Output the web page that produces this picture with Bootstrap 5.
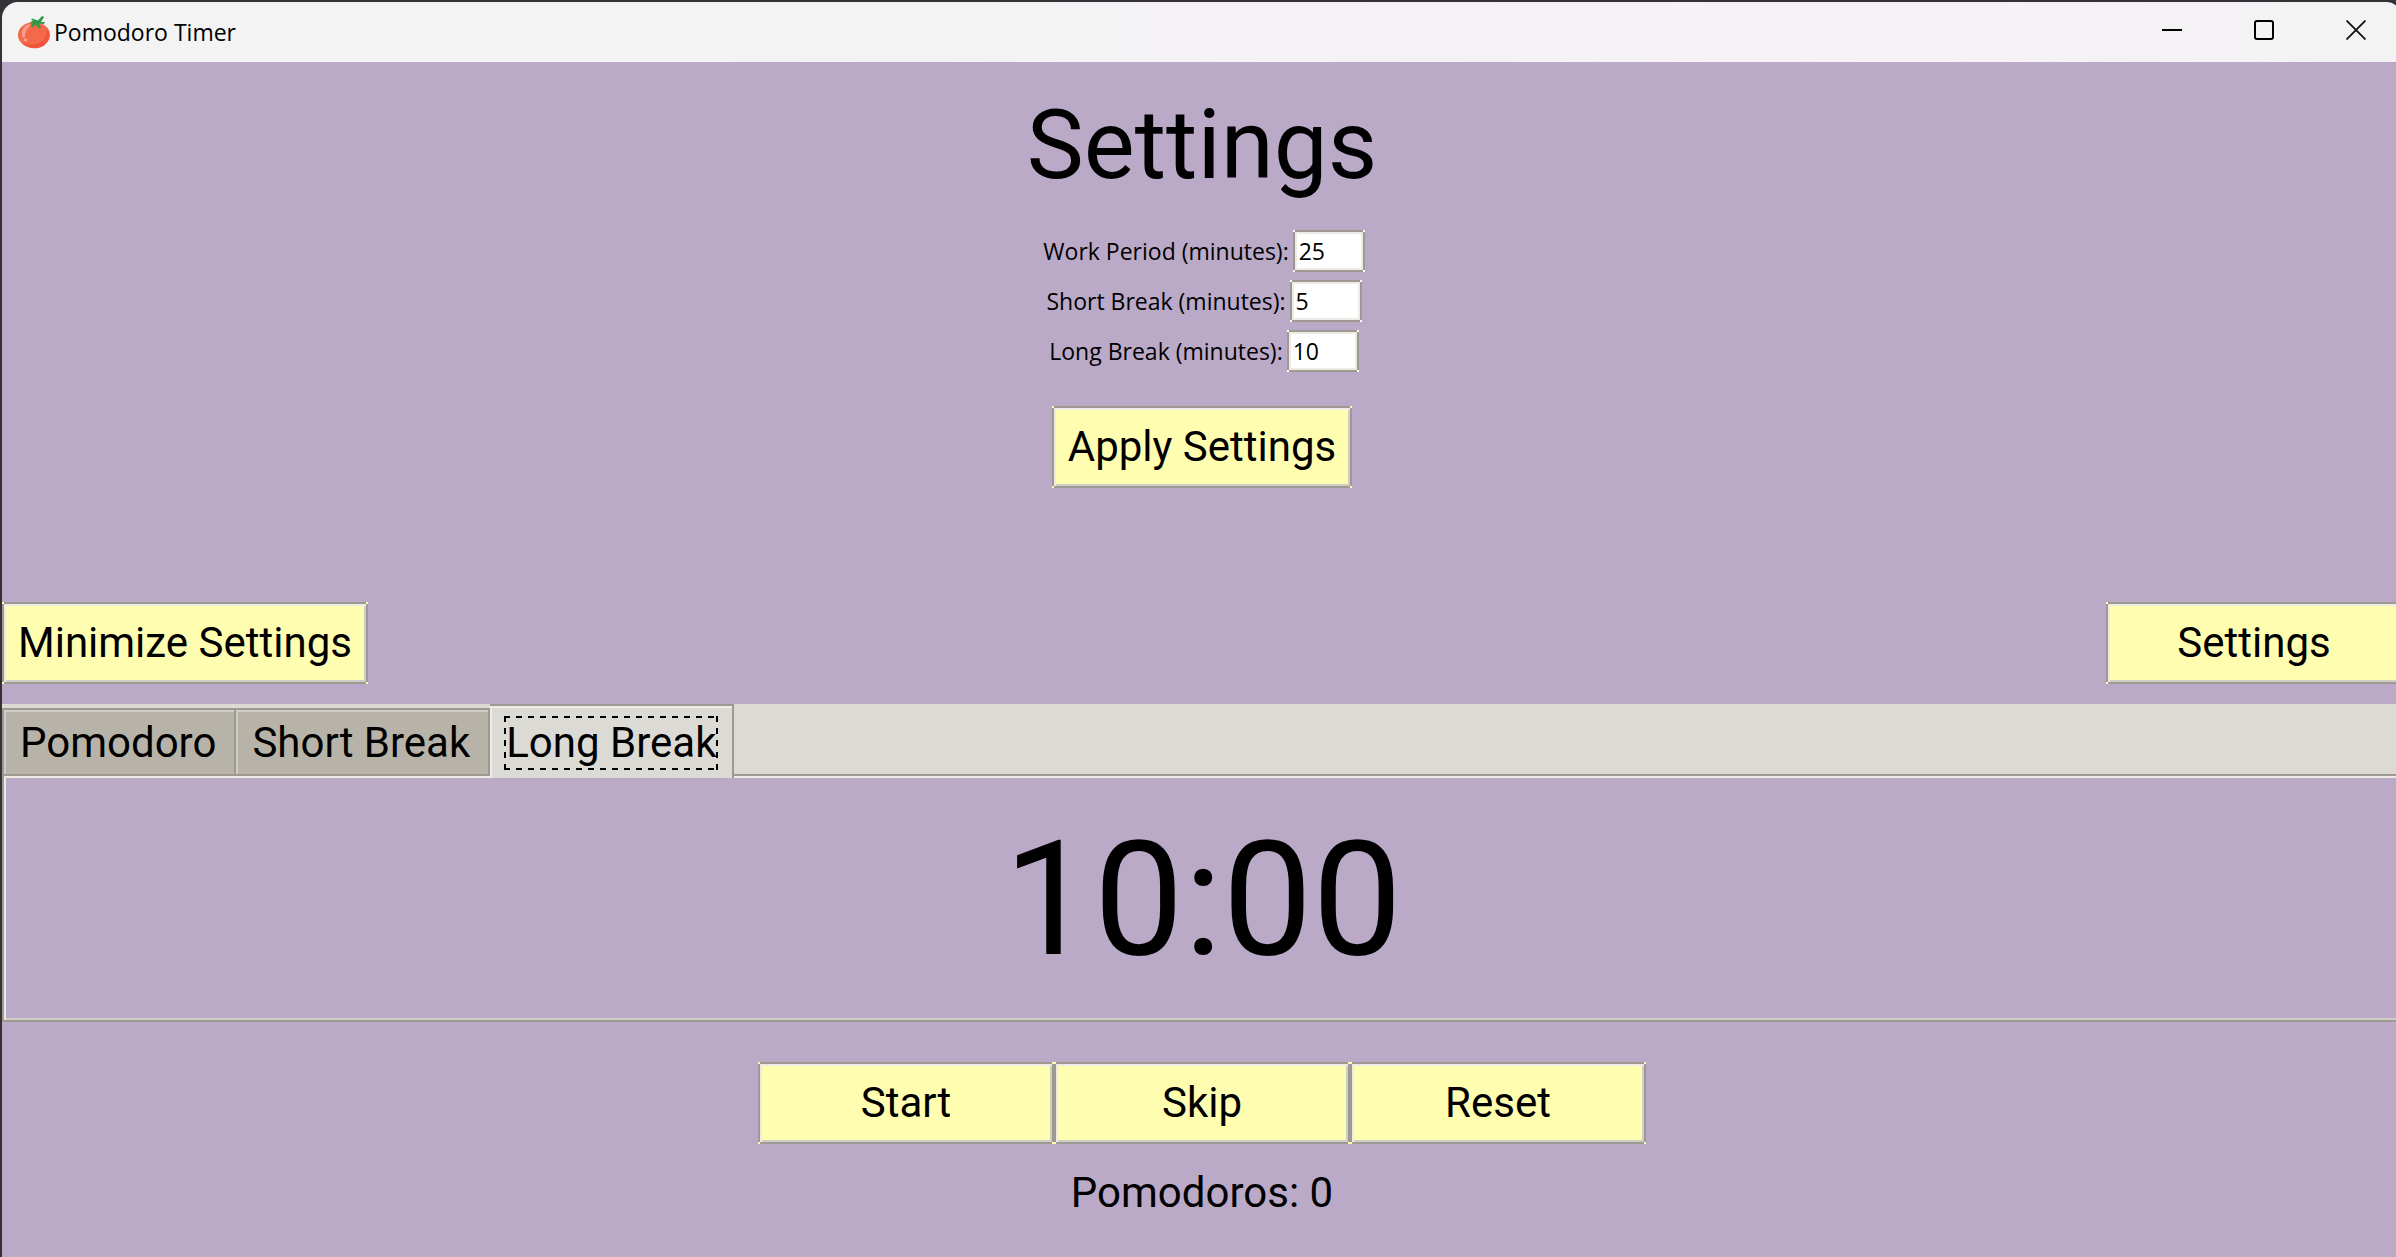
<!DOCTYPE html>
<html lang="en">
<head>
<meta charset="utf-8">
<meta name="viewport" content="width=device-width, initial-scale=1">
<title>Pomodoro Timer</title>
<link href="https://cdn.jsdelivr.net/npm/bootstrap@5.3.0/dist/css/bootstrap.min.css" rel="stylesheet">
<style>
:root {
  --lilac: #baaac7;
  --butter: #fffdb0;
  --edge: #9e9a91;
  --light: #eeebe7;
  --shade: #cfcdc8;
  --strip: #dcdad5;
}
body {
  background: #343236;
  color: #000;
  font: 42px/50px Roboto, "Liberation Sans", sans-serif;
  overflow: hidden;
}
/* the window runs slightly past the right side of the screen */
.app-window {
  min-height: 100vh;
  margin: 0 -6px 0 2px;
  padding-top: 2px;
}
.title-bar {
  height: 60px;
  padding-left: 16px;
  background: linear-gradient(90deg, #f3f3f3 0%, #f3f3f3 30%, #f6f1f7 80%, #f3f3f3 100%);
  border-radius: 16px 16px 0 0;
  font: 23px/32px "Open Sans", "Noto Sans", sans-serif;
}
.title-bar svg { display: block; }
.window-btn {
  width: 92px;
  height: 56px;
  padding: 0;
  border: 0;
  background: none;
}
.window-btn svg { margin: 0 auto; }
.app-body { background: var(--lilac); }

/* raised frame with open corners */
.tk-frame {
  --in-a: var(--light);
  --in-b: var(--shade);
  border: 0;
  border-radius: 0;
  color: #000;
  background-color: var(--face);
  background-image:
    linear-gradient(var(--edge), var(--edge)), linear-gradient(var(--edge), var(--edge)),
    linear-gradient(var(--edge), var(--edge)), linear-gradient(var(--edge), var(--edge)),
    linear-gradient(var(--in-a), var(--in-a)), linear-gradient(var(--in-a), var(--in-a)),
    linear-gradient(var(--in-b), var(--in-b)), linear-gradient(var(--in-b), var(--in-b));
  background-repeat: no-repeat;
  background-size:
    calc(100% - 4px) 2px, calc(100% - 4px) 2px,
    2px calc(100% - 4px), 2px calc(100% - 4px),
    calc(100% - 4px) 2px, 2px calc(100% - 4px),
    calc(100% - 4px) 2px, 2px calc(100% - 4px);
  background-position:
    center top, center bottom, left center, right center,
    center top 2px, left 2px center, center bottom 2px, right 2px center;
}
.tk-btn {
  --face: var(--butter);
  height: 82px;
  padding: 16px;
  white-space: nowrap;
}
.wide-btn { width: 296px; }
.entry-box {
  --face: #fff;
  width: 72px;
  height: 42px;
  padding: 0 6px;
}
.tk-frame.entry-box { --in-b: var(--light); }
.settings-title { font-size: 96px; line-height: 112px; padding-top: 27px; }
.field-list { gap: 8px; margin-top: 29px; padding-left: 4px; }
.field-row { gap: 4px; font: 23px/42px "Open Sans", "Noto Sans", sans-serif; }
.apply-area { margin-top: 34px; }
.toggle-area { margin-top: 114px; }

.tab-strip { margin-top: 20px; background: var(--strip); border-bottom: 2px solid var(--edge); height: 72px; }
.tab-btn {
  height: 66px;
  padding: 8px 18px 6px 16px;
  border: 0 solid var(--edge);
  border-width: 2px 2px 0 0;
  background: #b8b3a9;
  color: #000;
  box-shadow: inset 2px 2px 0 var(--shade);
}
.tab-btn:first-child { border-left-width: 2px; }
.tab-btn.active {
  height: 74px;
  margin-bottom: -4px;
  padding: 10px 14px;
  background: var(--strip);
  box-shadow: inset 2px 2px 0 var(--light);
  position: relative;
}
.focus-mark {
  --h: repeating-linear-gradient(90deg, #000 0 6px, transparent 6px 12px);
  --v: repeating-linear-gradient(0deg, #000 0 6px, transparent 6px 12px);
  display: block;
  padding: 2px;
  background: var(--h) top / 100% 2px no-repeat, var(--h) bottom / 100% 2px no-repeat,
    var(--v) left / 2px 100% no-repeat, var(--v) right / 2px 100% no-repeat;
}
.timer-pane {
  border-left: 2px solid var(--edge);
  border-bottom: 2px solid var(--edge);
  box-shadow: inset 2px 2px 0 var(--light), inset 0 -2px 0 var(--shade);
  padding: 30px 0 26px;
  font-size: 160px;
  line-height: 188px;
}
.control-area { margin-top: 40px; }
.count-text { margin-top: 24px; }
</style>
</head>
<body>
<div class="app-window d-flex flex-column">
  <header class="title-bar d-flex align-items-center">
    <svg width="32" height="34" viewBox="0 0 32 34" aria-hidden="true">
      <ellipse cx="16" cy="20" rx="16" ry="13" fill="#f4694a"/>
      <path d="M29 13c5 8 1 18-9 20-7 1-12-1-15-5 9 4 25 1 24-15z" fill="#f1553c"/>
      <path d="M4 21C3 14 7 10 12 9c1 3-5 4-5 12 0 2-3 2-3 0z" fill="#f9a08c"/>
      <circle cx="7.500" cy="25" r="1.700" fill="#f9a08c"/>
      <path d="M24 1l2 1-3 5 4 0-1 2-5-.5 2 4-2 1-3-4-4 3-1-1 2-4-2 1-1-1 3-2-2-1 1-1 6 2z" fill="#2f9a46"/>
    </svg>
    <span class="ms-1 me-auto">Pomodoro Timer</span>
    <button type="button" class="window-btn align-self-start" aria-label="Minimize"><svg width="20" height="20" viewBox="0 0 20 20"><path d="M0 10h20" stroke="#000" stroke-width="2"/></svg></button>
    <button type="button" class="window-btn align-self-start" aria-label="Maximize"><svg width="20" height="20" viewBox="0 0 20 20"><rect x="1" y="1" width="18" height="18" rx="2" fill="none" stroke="#000" stroke-width="2"/></svg></button>
    <button type="button" class="window-btn align-self-start" aria-label="Close"><svg width="20" height="20" viewBox="0 0 20 20"><path d="M.5.500l19 19M19.500.500l-19 19" stroke="#111" stroke-width="1.800"/></svg></button>
  </header>

  <main class="app-body flex-grow-1">
    <form class="d-flex flex-column align-items-center">
      <h1 class="settings-title fw-normal mb-0">Settings</h1>
      <div class="field-list d-flex flex-column align-items-center">
        <div class="field-row d-flex"><label for="work">Work Period (minutes):</label><input id="work" class="tk-frame entry-box" type="text" value="25"></div>
        <div class="field-row d-flex"><label for="short">Short Break (minutes):</label><input id="short" class="tk-frame entry-box" type="text" value="5"></div>
        <div class="field-row d-flex"><label for="long">Long Break (minutes):</label><input id="long" class="tk-frame entry-box" type="text" value="10"></div>
      </div>
      <div class="apply-area"><button type="button" class="tk-frame tk-btn">Apply Settings</button></div>
    </form>

    <div class="toggle-area d-flex justify-content-between">
      <button type="button" class="tk-frame tk-btn">Minimize Settings</button>
      <button type="button" class="tk-frame tk-btn wide-btn">Settings</button>
    </div>

    <div class="tab-strip d-flex align-items-end" role="tablist">
      <button type="button" class="tab-btn" role="tab" aria-selected="false">Pomodoro</button>
      <button type="button" class="tab-btn" role="tab" aria-selected="false">Short Break</button>
      <button type="button" class="tab-btn active" role="tab" aria-selected="true"><span class="focus-mark">Long Break</span></button>
    </div>
    <div class="timer-pane text-center" role="tabpanel">10:00</div>

    <div class="control-area d-flex justify-content-center">
      <button type="button" class="tk-frame tk-btn wide-btn">Start</button>
      <button type="button" class="tk-frame tk-btn wide-btn">Skip</button>
      <button type="button" class="tk-frame tk-btn wide-btn">Reset</button>
    </div>
    <p class="count-text text-center mb-0">Pomodoros: 0</p>
  </main>
</div>
<script src="https://cdn.jsdelivr.net/npm/bootstrap@5.3.0/dist/js/bootstrap.bundle.min.js"></script>
</body>
</html>
